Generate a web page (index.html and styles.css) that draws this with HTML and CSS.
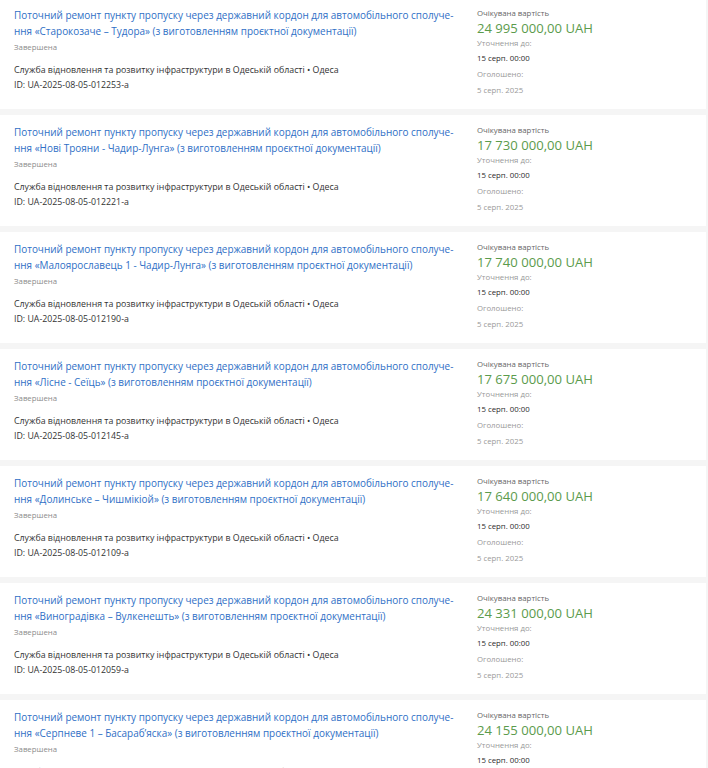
FILE: index.html
```html
<!DOCTYPE html>
<html lang="uk">
<head>
<meta charset="utf-8">
<link rel="stylesheet" href="styles.css">
</head>
<body>
<div class="list">
  <div class="card">
    <div class="main">
      <a class="title" href="#">Поточний ремонт пункту пропуску через державний кордон для автомобільного сполуче&shy;ння «Старокозаче – Тудора» (з виготовленням проєктної документації)</a>
      <div class="status">Завершена</div>
      <div class="org">Служба відновлення та розвитку інфраструктури в Одеській області • Одеса</div>
      <div class="id">ID: UA-2025-08-05-012253-a</div>
    </div>
    <div class="side">
      <div class="label">Очікувана вартість</div>
      <div class="price">24 995 000,00 UAH</div>
      <div class="muted">Уточнення до:</div>
      <div class="value">15 серп. 00:00</div>
      <div class="muted">Оголошено:</div>
      <div class="muted">5 серп. 2025</div>
    </div>
  </div>
  <div class="card">
    <div class="main">
      <a class="title" href="#">Поточний ремонт пункту пропуску через державний кордон для автомобільного сполуче&shy;ння «Нові Трояни - Чадир-Лунга» (з виготовленням проєктної документації)</a>
      <div class="status">Завершена</div>
      <div class="org">Служба відновлення та розвитку інфраструктури в Одеській області • Одеса</div>
      <div class="id">ID: UA-2025-08-05-012221-a</div>
    </div>
    <div class="side">
      <div class="label">Очікувана вартість</div>
      <div class="price">17 730 000,00 UAH</div>
      <div class="muted">Уточнення до:</div>
      <div class="value">15 серп. 00:00</div>
      <div class="muted">Оголошено:</div>
      <div class="muted">5 серп. 2025</div>
    </div>
  </div>
  <div class="card">
    <div class="main">
      <a class="title" href="#">Поточний ремонт пункту пропуску через державний кордон для автомобільного сполуче&shy;ння «Малоярославець 1 - Чадир-Лунга» (з виготовленням проєктної документації)</a>
      <div class="status">Завершена</div>
      <div class="org">Служба відновлення та розвитку інфраструктури в Одеській області • Одеса</div>
      <div class="id">ID: UA-2025-08-05-012190-a</div>
    </div>
    <div class="side">
      <div class="label">Очікувана вартість</div>
      <div class="price">17 740 000,00 UAH</div>
      <div class="muted">Уточнення до:</div>
      <div class="value">15 серп. 00:00</div>
      <div class="muted">Оголошено:</div>
      <div class="muted">5 серп. 2025</div>
    </div>
  </div>
  <div class="card">
    <div class="main">
      <a class="title" href="#">Поточний ремонт пункту пропуску через державний кордон для автомобільного сполуче&shy;ння «Лісне - Сеїць» (з виготовленням проєктної документації)</a>
      <div class="status">Завершена</div>
      <div class="org">Служба відновлення та розвитку інфраструктури в Одеській області • Одеса</div>
      <div class="id">ID: UA-2025-08-05-012145-a</div>
    </div>
    <div class="side">
      <div class="label">Очікувана вартість</div>
      <div class="price">17 675 000,00 UAH</div>
      <div class="muted">Уточнення до:</div>
      <div class="value">15 серп. 00:00</div>
      <div class="muted">Оголошено:</div>
      <div class="muted">5 серп. 2025</div>
    </div>
  </div>
  <div class="card">
    <div class="main">
      <a class="title" href="#">Поточний ремонт пункту пропуску через державний кордон для автомобільного сполуче&shy;ння «Долинське – Чишмікіой» (з виготовленням проєктної документації)</a>
      <div class="status">Завершена</div>
      <div class="org">Служба відновлення та розвитку інфраструктури в Одеській області • Одеса</div>
      <div class="id">ID: UA-2025-08-05-012109-a</div>
    </div>
    <div class="side">
      <div class="label">Очікувана вартість</div>
      <div class="price">17 640 000,00 UAH</div>
      <div class="muted">Уточнення до:</div>
      <div class="value">15 серп. 00:00</div>
      <div class="muted">Оголошено:</div>
      <div class="muted">5 серп. 2025</div>
    </div>
  </div>
  <div class="card">
    <div class="main">
      <a class="title" href="#">Поточний ремонт пункту пропуску через державний кордон для автомобільного сполуче&shy;ння «Виноградівка – Вулкенешть» (з виготовленням проєктної документації)</a>
      <div class="status">Завершена</div>
      <div class="org">Служба відновлення та розвитку інфраструктури в Одеській області • Одеса</div>
      <div class="id">ID: UA-2025-08-05-012059-a</div>
    </div>
    <div class="side">
      <div class="label">Очікувана вартість</div>
      <div class="price">24 331 000,00 UAH</div>
      <div class="muted">Уточнення до:</div>
      <div class="value">15 серп. 00:00</div>
      <div class="muted">Оголошено:</div>
      <div class="muted">5 серп. 2025</div>
    </div>
  </div>
  <div class="card">
    <div class="main">
      <a class="title" href="#">Поточний ремонт пункту пропуску через державний кордон для автомобільного сполуче&shy;ння «Серпневе 1 – Басараб’яска» (з виготовленням проєктної документації)</a>
      <div class="status">Завершена</div>
      <div class="org">Служба відновлення та розвитку інфраструктури в Одеській області • Одеса</div>
      <div class="id">ID: UA-2025-08-05-012036-a</div>
    </div>
    <div class="side">
      <div class="label">Очікувана вартість</div>
      <div class="price">24 155 000,00 UAH</div>
      <div class="muted">Уточнення до:</div>
      <div class="value">15 серп. 00:00</div>
      <div class="muted">Оголошено:</div>
      <div class="muted">5 серп. 2025</div>
    </div>
  </div>
</div>
</body>
</html>
```

FILE: styles.css
```css
html, body {
  margin: 0;
  padding: 0;
}
body {
  background: #f5f5f5;
  font-family: "Open Sans", "Noto Sans", sans-serif;
  overflow: hidden;
}
.list {
  width: 706px;
  margin-top: -2px;
  display: flex;
  flex-direction: column;
  gap: 6px;
}
.card {
  background: #ffffff;
  height: 111px;
  box-sizing: border-box;
  padding: 9px 0 0 14px;
  display: flex;
  overflow: hidden;
}
.main {
  flex: 0 0 446px;
  margin-right: 17px;
}
.title {
  display: block;
  color: #2f6fc6;
  text-decoration: none;
  font-size: 9.95px;
  line-height: 16px;
}
.status {
  font-size: 7.8px;
  line-height: 17px;
  color: #8c8c8c;
}
.org {
  margin-top: 7px;
  font-size: 8.8px;
  line-height: 15px;
  color: #333333;
}
.id {
  font-size: 8.8px;
  line-height: 15px;
  color: #333333;
}
.side {
  margin-top: -2.5px;
  display: flex;
  flex-direction: column;
}
.label {
  font-size: 7.8px;
  line-height: 16px;
  color: #666666;
}
.price {
  font-size: 13.1px;
  line-height: 15px;
  color: #5b9b4c;
}
.muted {
  font-size: 7.8px;
  line-height: 15.7px;
  color: #999999;
}
.value {
  font-size: 7.8px;
  line-height: 15.7px;
  color: #2b2b2b;
}
```
